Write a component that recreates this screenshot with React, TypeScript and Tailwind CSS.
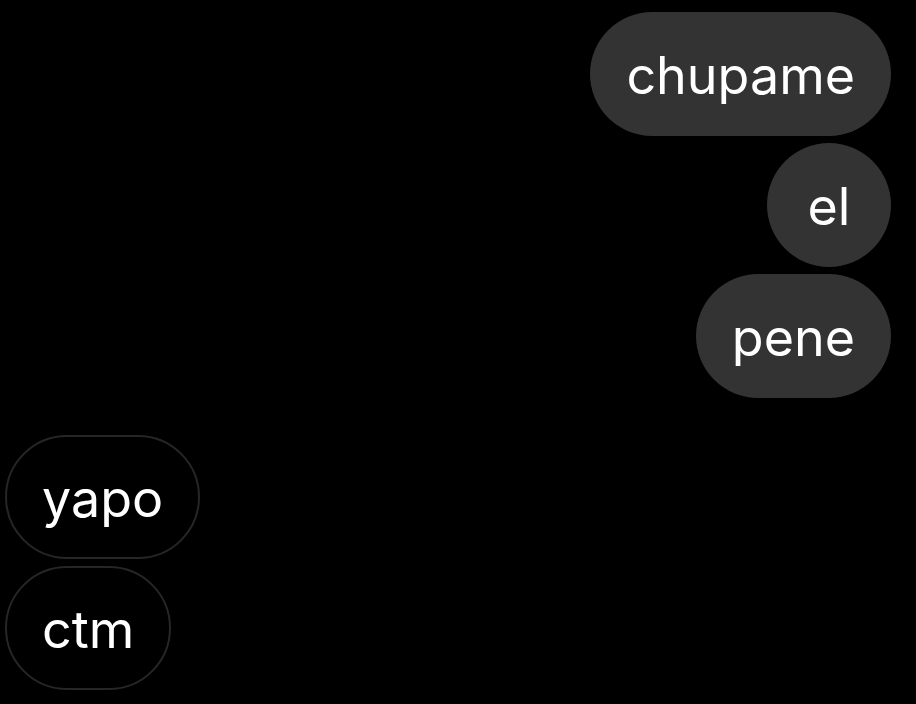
import React from "react";

const font = { fontFamily: "Inter, 'Noto Sans', sans-serif" };

function Sent({ text }: { text: string }) {
  return (
    <div className="flex justify-end">
      <div className="h-[124px] min-w-[124px] rounded-full bg-[#333333] px-[36px] pt-[4px] flex items-center justify-center text-white text-[52px] leading-none">
        {text}
      </div>
    </div>
  );
}

function Received({ text }: { text: string }) {
  return (
    <div className="flex justify-start">
      <div className="h-[124px] min-w-[124px] rounded-full border-2 border-[#262626] px-[35px] pt-[4px] flex items-center justify-center text-white text-[52px] leading-none">
        {text}
      </div>
    </div>
  );
}

export default function App() {
  return (
    <div className="w-[916px] h-[704px] bg-black overflow-hidden" style={font}>
      <div className="flex flex-col pt-[12px] pl-[5px] pr-[25px]">
        <div className="flex flex-col gap-[7px]">
          <Sent text="chupame" />
          <Sent text="el" />
          <Sent text="pene" />
        </div>
        <div className="flex flex-col gap-[7px] mt-[37px]">
          <Received text="yapo" />
          <Received text="ctm" />
        </div>
      </div>
    </div>
  );
}
